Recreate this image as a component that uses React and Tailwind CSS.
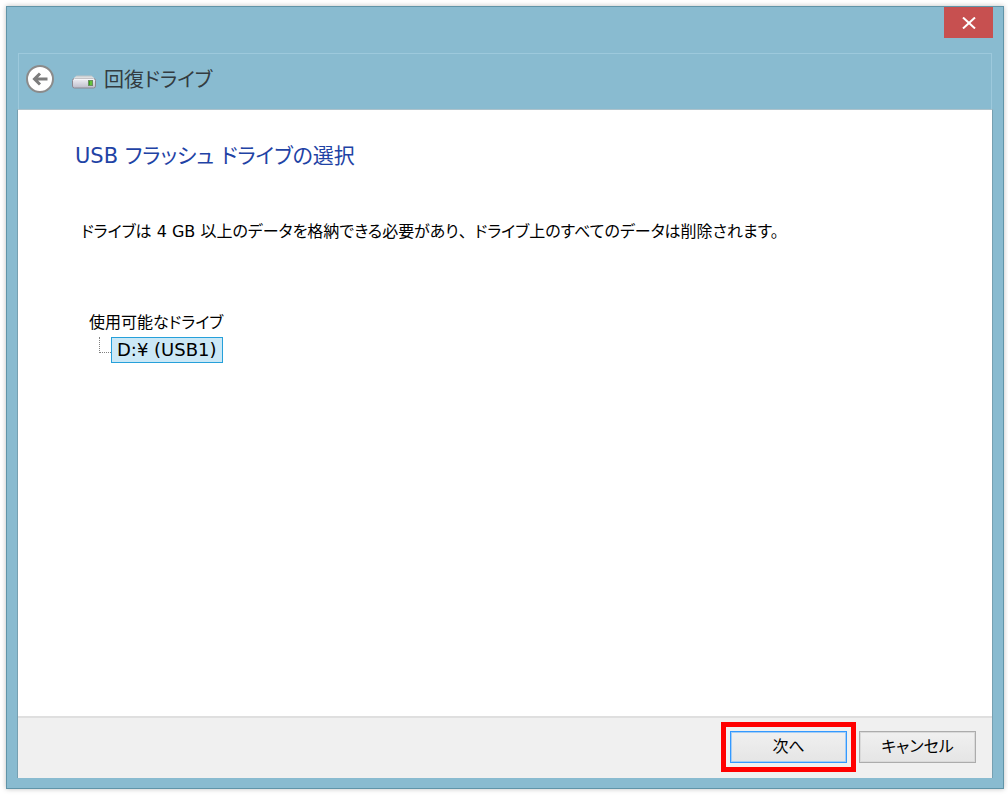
import React from "react";

function BackIcon() {
  return (
    <svg viewBox="0 0 30 30" className="size-[30px]" aria-hidden="true">
      <circle cx="15" cy="15" r="13" fill="#fff" stroke="#8b8b8b" strokeWidth="2" />
      <path d="M22.500 15H9.500M15 9.500L9.500 15l5.500 5.500" fill="none" stroke="#7c7c7c" strokeWidth="3" />
    </svg>
  );
}

function DriveIcon() {
  return (
    <svg viewBox="0 0 24 14" className="w-6 h-[14px]" aria-hidden="true">
      <defs>
        <linearGradient id="drive-top" x1="0" y1="0" x2="0" y2="1">
          <stop offset="0" stopColor="#bfc3c6" />
          <stop offset="1" stopColor="#f4f4f4" />
        </linearGradient>
        <linearGradient id="drive-front" x1="0" y1="0" x2="0" y2="1">
          <stop offset="0" stopColor="#f1f1f6" />
          <stop offset="1" stopColor="#bdbdcb" />
        </linearGradient>
      </defs>
      <path d="M4.500 0.500h15L23 4H1z" fill="url(#drive-top)" />
      <rect x="0.500" y="3.500" width="23" height="9.500" rx="2" fill="url(#drive-front)" stroke="#8c8790" />
      <path d="M2 4h20" stroke="#fff" />
      <rect x="16.500" y="5.500" width="4" height="5" fill="#3aa51c" stroke="#6a8d62" />
      <path d="M19 6v4" stroke="#8be05a" />
    </svg>
  );
}

function CloseIcon() {
  return (
    <svg viewBox="0 0 14 12" className="w-[14px] h-3" aria-hidden="true">
      <path d="M1 0.500l12 11M13 0.500l-12 11" stroke="#fff" strokeWidth="2" />
    </svg>
  );
}

export default function App() {
  return (
    <div className="flex min-h-screen bg-white pt-[6px] pr-1 pb-[6px] pl-[6px] font-['DejaVu_Sans','Noto_Sans_CJK_JP',sans-serif] text-base text-black [font-feature-settings:'palt']">
      <div className="flex flex-1 flex-col border border-[#6094a8] bg-[#89bbd0] px-[10px] pb-[10px] shadow-[0_0_5px_rgba(0,0,0,0.25)]">
        <div className="flex h-[46px] shrink-0 items-start justify-end">
          <button type="button" aria-label="閉じる" className="flex h-[31px] w-[49px] items-center justify-center bg-[#c75050]">
            <CloseIcon />
          </button>
        </div>

        <header className="mx-px flex h-14 shrink-0 items-center border border-b-0 border-[#9dc9dc] pl-[6px] pb-[6px]">
          <button type="button" aria-label="戻る" className="flex">
            <BackIcon />
          </button>
          <span className="ml-[17px] flex pt-[6px]">
            <DriveIcon />
          </span>
          <h1 className="ml-2 pt-[2px] text-xl leading-8 text-[#333b40]">回復ドライブ</h1>
        </header>

        <div className="flex flex-1 flex-col border-x border-t border-x-[#76a0b1] border-t-[#adc2cb] bg-white">
          <main className="flex-1 px-[57px] pt-7">
            <h2 className="text-[21px] leading-9 text-[#1f43a5]">USB フラッシュ ドライブの選択</h2>
            <p className="mt-11 pl-[6px] leading-7">
              ドライブは 4 GB 以上のデータを格納できる必要があり<span className="[font-feature-settings:normal]">、</span>ドライブ上のすべてのデータは削除されます。
            </p>
            <section className="mt-[63px] pl-[14px]">
              <h3 id="drives" className="leading-7">使用可能なドライブ</h3>
              <ul aria-labelledby="drives">
                <li className="flex pl-[10px]">
                  <span className="h-4 w-3 border-b border-l border-dotted border-[#808080]" />
                  <button type="button" className="border border-[#26a0da] bg-[#cbe8f6] px-[5px] text-lg leading-6">
                    D:¥ (USB1)
                  </button>
                </li>
              </ul>
            </section>
          </main>

          <footer className="flex h-[62px] shrink-0 items-center justify-end border-t-2 border-[#dfdfdf] bg-[#f0f0f0] pr-4 pb-[3px]">
            <div className="mr-[3px] border-5 border-[#ff0000] p-1">
              <button type="button" className="block h-8 w-[117px] border border-[#3399ff] bg-linear-to-b from-[#f0f0f0] to-[#e5e5e5] leading-7 shadow-[inset_0_0_0_1px_#a5cdf4]">
                次へ
              </button>
            </div>
            <button type="button" className="h-8 w-[117px] border border-[#acacac] bg-linear-to-b from-[#f0f0f0] to-[#e5e5e5] leading-7 shadow-[inset_0_0_0_1px_#dadada]">
              キャンセル
            </button>
          </footer>
        </div>
      </div>
    </div>
  );
}
